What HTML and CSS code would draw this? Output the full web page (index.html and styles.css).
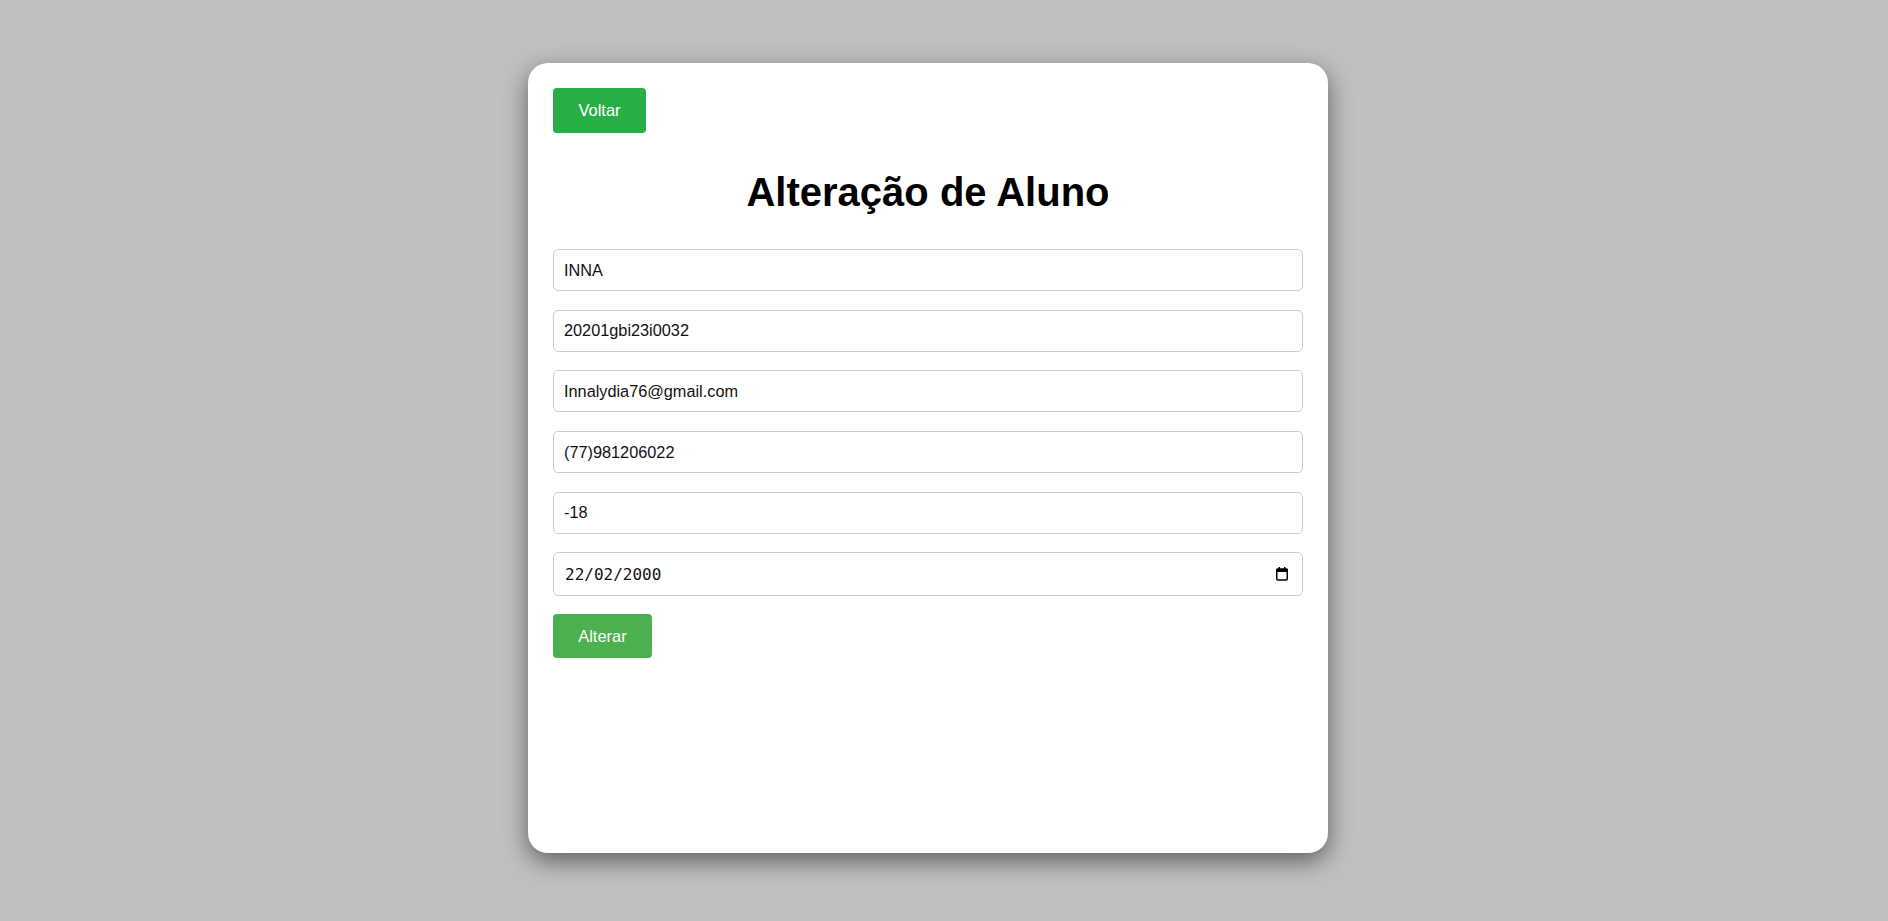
FILE: index.html
```html
<!DOCTYPE html>
<html lang="pt-BR">
<head>
<meta charset="utf-8">
<title>Alteração de Aluno</title>
<link rel="stylesheet" href="styles.css">
</head>
<body>
<div class="page">
  <div class="card">
    <div class="top-row">
      <button class="btn btn-back" type="button">Voltar</button>
    </div>
    <h1 class="title">Alteração de Aluno</h1>
    <form class="form">
      <input class="field" type="text" value="INNA">
      <input class="field" type="text" value="20201gbi23i0032">
      <input class="field" type="text" value="Innalydia76@gmail.com">
      <input class="field" type="text" value="(77)981206022">
      <input class="field" type="text" value="-18">
      <label class="date-field">
        <input class="date-input" type="text" value="22/02/2000">
        <svg class="cal-icon" width="14" height="14" viewBox="0 0 14 14" aria-hidden="true">
          <rect x="1.75" y="2.25" width="10.5" height="10.75" rx="1" fill="none" stroke="#000" stroke-width="1.5"/>
          <rect x="1" y="1.5" width="12" height="3.5" rx="1" fill="#000"/>
          <rect x="3.5" y="0" width="1.5" height="2" fill="#000"/>
          <rect x="9" y="0" width="1.5" height="2" fill="#000"/>
        </svg>
      </label>
      <div class="actions">
        <button class="btn btn-submit" type="button">Alterar</button>
      </div>
    </form>
  </div>
</div>
</body>
</html>
```

FILE: styles.css
```css
html, body {
  margin: 0;
  padding: 0;
}
body {
  background: #c0c0c0;
  font-family: "Liberation Sans", Arial, sans-serif;
  height: 921px;
  overflow: hidden;
}
.page {
  display: flex;
  justify-content: center;
  padding: 63px 32px 0 0;
}
.card {
  box-sizing: border-box;
  width: 800px;
  height: 790px;
  background: #fff;
  border-radius: 20px;
  padding: 25px;
  box-shadow: 0 8px 24px rgba(0, 0, 0, 0.5);
  display: flex;
  flex-direction: column;
}
.top-row {
  display: flex;
}
.btn {
  box-sizing: border-box;
  height: 45px;
  border: none;
  border-radius: 4px;
  color: #fff;
  font-family: "Liberation Sans", Arial, sans-serif;
  font-size: 16.5px;
  padding: 0;
  cursor: pointer;
}
.btn-back {
  background: #28ae47;
  width: 93px;
}
.title {
  margin: 36px 0 34px;
  text-align: center;
  font-size: 40px;
  line-height: 46px;
  font-weight: bold;
  color: #000;
}
.form {
  display: flex;
  flex-direction: column;
  gap: 18.7px;
}
.field {
  box-sizing: border-box;
  width: 100%;
  height: 42px;
  margin: 0;
  padding: 0 10px;
  border: 1px solid #cccccc;
  border-radius: 5px;
  font-family: "Liberation Sans", Arial, sans-serif;
  font-size: 16.3px;
  color: #111;
  background: #fff;
}
.date-field {
  box-sizing: border-box;
  display: flex;
  align-items: center;
  height: 44px;
  padding: 0 13px 0 11px;
  border: 1px solid #cccccc;
  border-radius: 5px;
  background: #fff;
}
.date-input {
  flex: 1;
  min-width: 0;
  border: none;
  outline: none;
  padding: 0;
  margin: 0;
  background: transparent;
  font-family: "DejaVu Sans Mono", monospace;
  font-size: 16px;
  color: #111;
}
.cal-icon {
  flex: none;
  display: block;
}
.actions {
  display: flex;
  margin-top: -1px;
}
.btn-submit {
  background: #4caf50;
  width: 99px;
  height: 44px;
}
```
